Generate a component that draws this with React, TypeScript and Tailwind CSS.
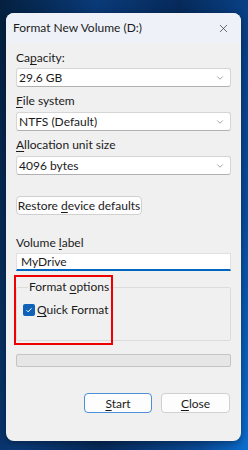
import { ChevronDown, X } from "lucide-react";

const FONT = "font-['Segoe_UI','Lato','Noto_Sans',sans-serif]";

function U({ children }: { children: string }) {
  return <span className="underline underline-offset-[2px] decoration-[1px]">{children}</span>;
}

function Select({ value, className = "" }: { value: string; className?: string }) {
  return (
    <div
      className={`flex h-[19px] w-[215px] items-center justify-between rounded-[3px] border border-[#d5d5d5] border-b-[#b0b0b0] bg-white pl-[2px] pr-[5px] text-[12px] text-[#1b1b1b] ${className}`}
    >
      <span>{value}</span>
      <ChevronDown className="size-[10px] text-[#6b6b6b]" strokeWidth={1.5} />
    </div>
  );
}

function Button({ children, primary }: { children: React.ReactNode; primary?: boolean }) {
  return (
    <button
      type="button"
      className={`h-[20px] whitespace-nowrap rounded-[4px] bg-[#fdfdfd] text-center text-[12px] leading-[17px] text-[#1b1b1b] ${
        primary ? "w-[68px] border-[1.5px] border-[#4c8fd6]" : "w-[69px] border border-[#d0d0d0]"
      }`}
    >
      {children}
    </button>
  );
}

export default function App() {
  return (
    <div
      className={`h-[450px] w-[248px] overflow-hidden bg-[linear-gradient(100deg,#04203f_0%,#0a3a78_30%,#062a5a_55%,#0a4a98_85%,#0b6fd0_100%)] pl-[6px] pt-[13px] ${FONT}`}
    >
      <div className="relative flex h-[428px] w-[235px] flex-col overflow-hidden rounded-[8px] bg-[#f0f0f0] shadow-[0_2px_8px_rgba(0,0,0,0.4)]">
        {/* title bar */}
        <div className="flex h-[30px] items-center justify-between bg-[#eef2f8] pl-[7px] pr-[11px] text-[12px] text-[#1b1b1b]">
          <span>Format New Volume (D:)</span>
          <X className="size-[13px] text-[#333]" strokeWidth={1.3} />
        </div>

        <div className="flex flex-col px-[10px] pt-[7px] text-[12px] leading-[16px] text-[#1b1b1b]">
          <span>
            Ca<U>p</U>acity:
          </span>
          <Select value="29.6 GB" className="mt-[2px]" />

          <span className="mt-[6px]">
            <U>F</U>ile system
          </span>
          <Select value="NTFS (Default)" className="mt-[3px]" />

          <span className="mt-[6px]">
            <U>A</U>llocation unit size
          </span>
          <Select value="4096 bytes" className="mt-[3px]" />

          <button
            type="button"
            className="mt-[21px] h-[19px] w-[126px] whitespace-nowrap rounded-[4px] border border-[#d0d0d0] bg-[#fdfdfd] text-center leading-[17px]"
          >
            Restore <U>d</U>evice defaults
          </button>

          <span className="mt-[20px]">
            Volume <U>l</U>abel
          </span>
          <div className="mt-[2px] flex h-[18px] w-[215px] items-center border border-[#e0e0e0] border-b-[2px] border-b-[#0067c0] bg-white pl-[4px]">
            MyDrive
          </div>

          <fieldset className="mt-[9px] h-[61px] w-[215px] rounded-[2px] border border-[#dcdcdc] pl-[6px]">
            <legend className="ml-[5px] px-[1px] leading-[14px]">
              Format <U>o</U>ptions
            </legend>
            <label className="mt-[8px] flex items-center gap-[2px]">
              <span className="flex size-[12px] items-center justify-center rounded-[2px] bg-[#0f62b8]">
                <svg viewBox="0 0 12 12" className="size-[10px]" fill="none" stroke="white" strokeWidth={1.2}>
                  <path d="M3 6.2 5 8.2 9 4" />
                </svg>
              </span>
              <span>
                <U>Q</U>uick Format
              </span>
            </label>
          </fieldset>

          <div className="mt-[13px] h-[13px] w-[215px] rounded-[2px] border border-[#c4c4c4] bg-[#e6e6e6]" />

          <div className="mt-[26px] flex justify-end gap-[9px] pr-[1px]">
            <Button primary>
              <U>S</U>tart
            </Button>
            <Button>
              <U>C</U>lose
            </Button>
          </div>
        </div>

        {/* annotation box */}
        <div className="absolute left-[8px] top-[262px] h-[70px] w-[99px] border-[2.5px] border-[#ee0000]" />
      </div>
    </div>
  );
}
